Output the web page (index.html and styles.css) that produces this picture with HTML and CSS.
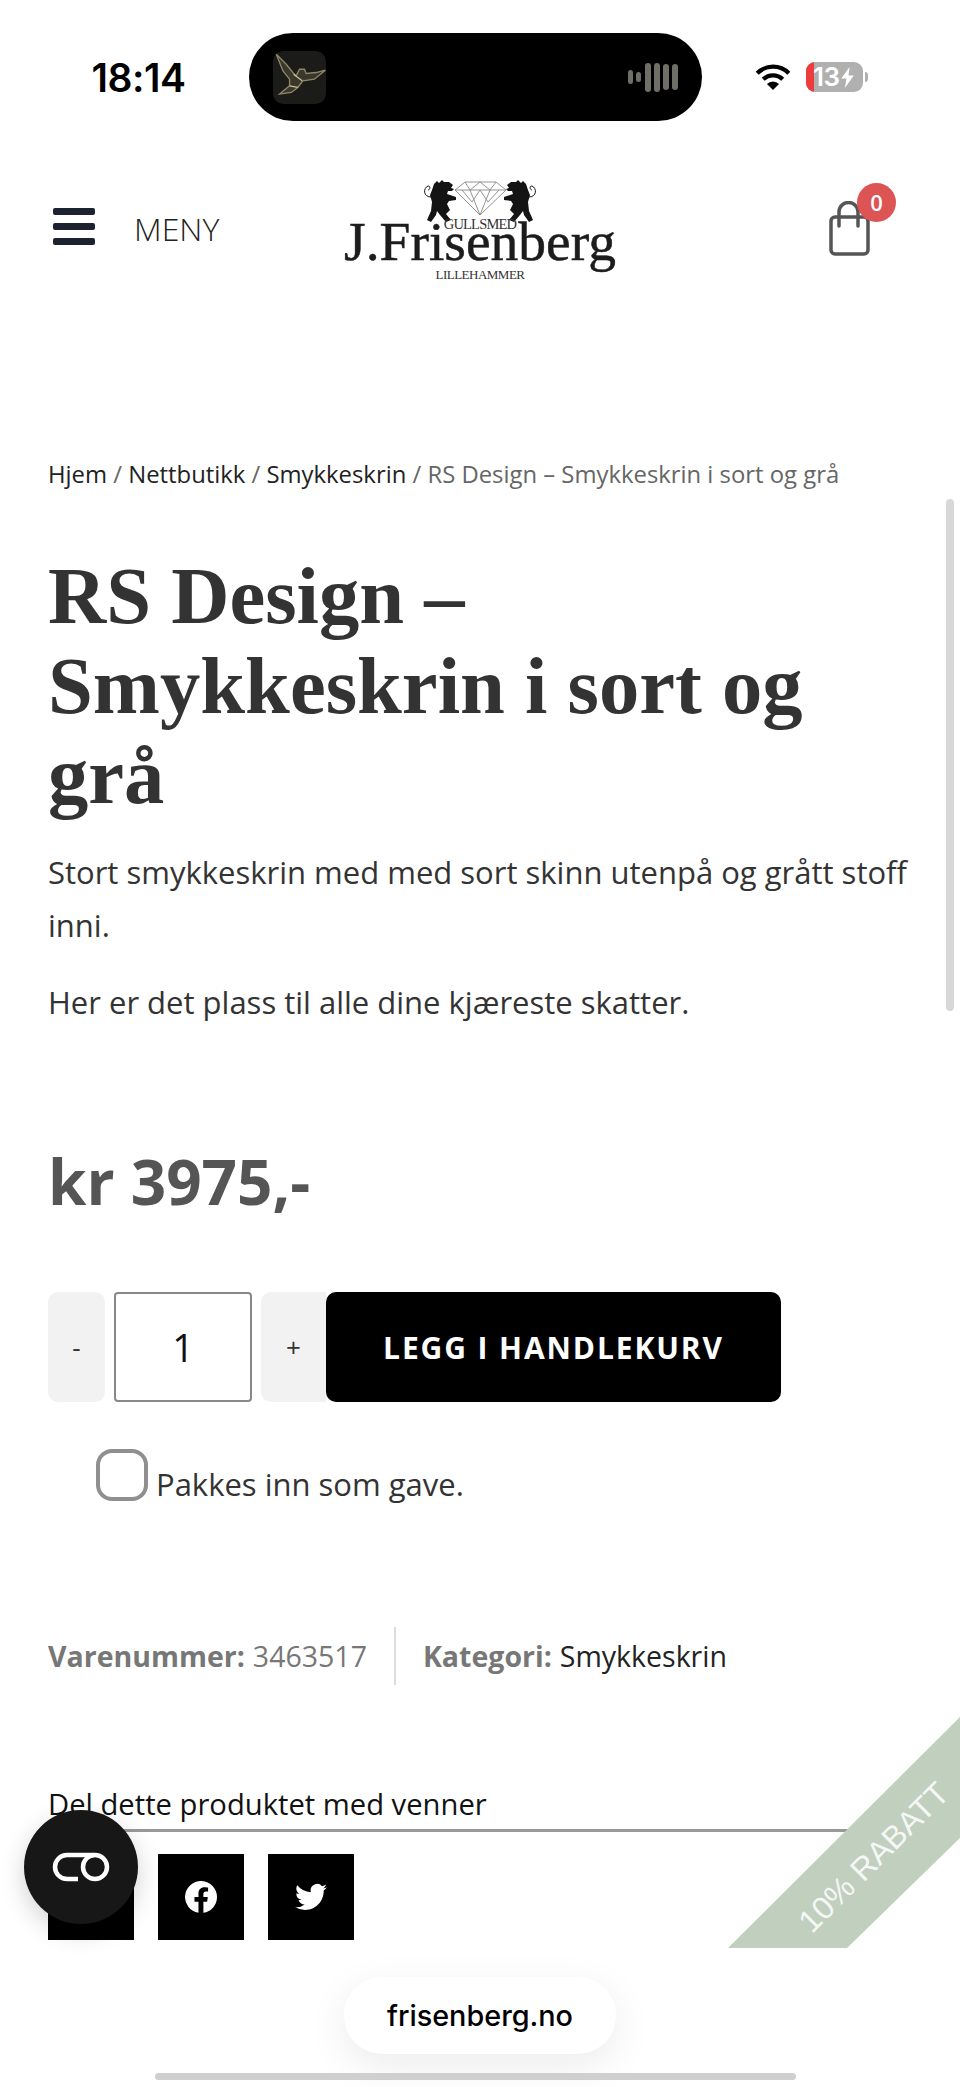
FILE: index.html
```html
<!DOCTYPE html>
<html lang="no">
<head>
<meta charset="utf-8">
<title>RS Design – Smykkeskrin i sort og grå</title>
<link rel="stylesheet" href="styles.css">
</head>
<body>
<div class="page">
  <div class="status">
    <span class="time">18:14</span>
    <div class="island">
      <svg class="album" viewBox="0 0 160 160"><rect width="160" height="160" rx="32" fill="#1b1b19"/><path d="M10 10 L40 40 L60 65 L70 75 L80 55 L95 55 L100 68 L130 65 L158 58 L125 85 L90 90 L75 110 L55 125 L20 130 L50 105 L50 85 L30 60Z" fill="#3a382c" stroke="#8f8768" stroke-width="4"/><path d="M62 70 L88 90 M50 105 L75 110" fill="none" stroke="#c9c08a" stroke-width="4"/></svg>
      <div class="wave"><i class="w1"></i><i class="w2"></i><i class="w3"></i><i class="w3"></i><i class="w4"></i><i class="w4"></i></div>
    </div>
    <div class="sys">
      <svg class="wifi" viewBox="0 0 38 28"><path d="M2 10 A24 24 0 0 1 36 10" fill="none" stroke="#000" stroke-width="4.600"/><path d="M8.500 16.500 A15 15 0 0 1 29.500 16.500" fill="none" stroke="#000" stroke-width="4.600"/><path d="M19 28 L12.500 21.500 A9 9 0 0 1 25.500 21.500Z" fill="#000"/></svg>
      <div class="battery"><span class="low"></span><span class="pct">13</span><svg class="bolt" viewBox="0 0 12 20"><path d="M8 0 L0 11 H5 L3.500 20 L12 8 H7Z" fill="#fff"/></svg></div>
      <span class="nub"></span>
    </div>
  </div>

  <header class="head">
    <div class="menu">
      <div class="burger"><i></i><i></i><i></i></div>
      <span class="menu-label">MENY</span>
    </div>
    <div class="logo">
      <svg class="crest" viewBox="0 0 114 43">
        <defs>
          <g id="lion">
            <path d="M11 4 L14 1 L16 3 L19 0 L21 2 L26 2 L30 5 L28 8 L31 9 L29 11 L25 11 L24 14 L33 17 L33 20 L26 21 L24 24 L27 30 L23 34 L28 40 L23 42 L17 35 L14 31 L13 35 L8 42 L4 40 L8 31 L9 22 L7 15 L9 10Z" fill="#141414"/>
            <path d="M8 17 C0 17 0 8 5 6 C8 6 7 10 5 10" fill="none" stroke="#141414" stroke-width="1"/>
          </g>
        </defs>
        <use href="#lion"/>
        <use href="#lion" transform="translate(114,0) scale(-1,1)"/>
        <path d="M32 10 L42 2 H73 L83 10 L57 35Z M32 10 H83 M42 2 L47 10 L57 2 L67 10 L73 2 M47 10 L57 35 L67 10 M39 10 L49 22 L57 10 L65 22 L76 10" fill="none" stroke="#888" stroke-width="0.900"/>
      </svg>
      <span class="logo-g">GULLSMED</span>
      <span class="logo-n">J.Frisenberg</span>
      <span class="logo-l">LILLEHAMMER</span>
    </div>
    <div class="cart">
      <svg class="bag" viewBox="0 0 42 56"><rect x="3" y="16" width="37" height="37" rx="4" fill="none" stroke="#555" stroke-width="3.500"/><path d="M11 25 V11 A9.500 9.500 0 0 1 30 11 V25" fill="none" stroke="#555" stroke-width="3.500" stroke-linecap="round"/></svg>
      <span class="badge">0</span>
    </div>
  </header>

  <main class="main">
    <nav class="crumbs"><a>Hjem</a> / <a>Nettbutikk</a> / <a>Smykkeskrin</a> / RS Design – Smykkeskrin i sort og grå</nav>
    <h1 class="title">RS Design – Smykkeskrin i sort og grå</h1>
    <p class="desc">Stort smykkeskrin med med sort skinn utenpå og grått stoff inni.</p>
    <p class="desc second">Her er det plass til alle dine kjæreste skatter.</p>
    <div class="price">kr 3975,-</div>
    <div class="buy">
      <button class="step minus">-</button>
      <div class="qty">1</div>
      <button class="step plus">+</button>
      <button class="add">LEGG I HANDLEKURV</button>
    </div>
    <label class="gift"><span class="check"></span><span class="gift-text">Pakkes inn som gave.</span></label>
    <div class="meta">
      <span class="meta-item"><b>Varenummer:</b> 3463517</span>
      <span class="meta-item cat"><b>Kategori:</b> <a>Smykkeskrin</a></span>
    </div>
    <div class="share-title">Del dette produktet med venner</div>
    <div class="share">
      <a class="tile"></a>
      <a class="tile"><svg class="ico" viewBox="0 0 24 24"><path fill="#fff" d="M24 12a12 12 0 1 0-13.900 11.900v-8.400H7.100V12h3V9.400c0-3 1.800-4.700 4.500-4.700 1.300 0 2.700.2 2.700.2v3h-1.500c-1.500 0-2 .9-2 1.900V12h3.300l-.5 3.500h-2.800v8.400A12 12 0 0 0 24 12z"/></svg></a>
      <a class="tile"><svg class="ico" viewBox="0 0 24 24"><path fill="#fff" d="M24 4.600a9.800 9.800 0 0 1-2.800.8 4.900 4.900 0 0 0 2.200-2.700 9.900 9.900 0 0 1-3.100 1.200 4.900 4.900 0 0 0-8.400 4.500A14 14 0 0 1 1.700 3.200a4.900 4.900 0 0 0 1.500 6.600 4.900 4.900 0 0 1-2.200-.6v.1a4.900 4.900 0 0 0 3.900 4.800 4.900 4.900 0 0 1-2.200.1 4.900 4.900 0 0 0 4.600 3.400A9.900 9.900 0 0 1 0 19.500a14 14 0 0 0 7.500 2.200c9.100 0 14-7.500 14-14v-.6A10 10 0 0 0 24 4.600z"/></svg></a>
    </div>
  </main>

  <div class="scroll"></div>
  <div class="ribbon"><span class="ribbon-text">10% RABATT</span></div>
  <div class="fab"><svg class="fab-ico" viewBox="0 0 58 30"><path d="M26 27 H15 A12 12 0 0 1 15 3 H42" fill="none" stroke="#fff" stroke-width="4.500"/><circle cx="43" cy="15" r="12" fill="none" stroke="#fff" stroke-width="4.500"/></svg></div>
  <div class="url">frisenberg.no</div>
  <div class="home"></div>
</div>
</body>
</html>
```
FILE: styles.css
```css
* { box-sizing: border-box; }
html, body { margin: 0; padding: 0; background: #fff; }
.page { position: relative; width: 960px; height: 2087px; overflow: hidden; font-family: "Open Sans", sans-serif; color: #333; }

.status { display: flex; align-items: center; height: 88px; margin-top: 33px; position: relative; }
.time { width: 249px; padding-left: 40px; padding-right: 12px; text-align: center; font-family: Inter, sans-serif; font-size: 39px; font-weight: 600; color: #000; letter-spacing: -0.5px; }
.island { width: 453px; height: 88px; background: #000; border-radius: 44px; display: flex; align-items: center; justify-content: space-between; padding: 0 24px; flex: none; }
.album { width: 53px; height: 53px; margin-top: 1px; }
.wave { display: flex; align-items: center; gap: 3px; }
.wave i { display: block; width: 6px; background: #6f6f68; border-radius: 3px; }
.wave .w1 { height: 14px; width: 5px; }
.wave .w2 { height: 10px; width: 5px; margin-right: 1px; }
.wave .w3 { height: 29px; }
.wave .w4 { height: 26px; }
.sys { display: flex; align-items: center; margin-left: 52px; }
.wifi { width: 38px; height: 26px; }
.battery { display: flex; align-items: center; position: relative; margin-left: 14px; width: 57px; height: 30px; background: #b0b0b0; border-radius: 9px; overflow: hidden; padding-left: 7px; }
.low { position: absolute; left: 0; top: 0; bottom: 0; width: 8px; background: #ee3b3b; }
.pct { position: relative; font-family: Inter, sans-serif; font-size: 26px; font-weight: 600; color: #fff; letter-spacing: -0.5px; line-height: 30px; }
.bolt { width: 13px; height: 21px; margin-left: 1px; }
.nub { width: 3px; height: 10px; margin-left: 2px; background: #b0b0b0; border-radius: 0 3px 3px 0; }

.head { display: flex; align-items: flex-start; height: 160px; position: relative; margin-top: 59px; }
.menu { display: flex; align-items: center; padding-left: 53px; margin-top: 26px; height: 40px; width: 344px; }
.burger { display: flex; flex-direction: column; gap: 8px; width: 42px; }
.burger i { display: block; height: 7px; background: #1c2230; border-radius: 2px; }
.menu-label { margin-left: 39px; font-size: 32px; font-weight: 300; color: #222; line-height: 40px; margin-top: 5px; }
.logo { width: 272px; display: flex; flex-direction: column; align-items: center; flex: none; position: relative; }
.crest { width: 114px; height: 43px; display: block; }
.logo-g { font-family: "Liberation Serif", serif; font-size: 14.500px; line-height: 14px; letter-spacing: -0.800px; color: #333; margin-top: -6px; position: relative; }
.logo-n { font-family: "Liberation Serif", serif; font-size: 55.500px; line-height: 44px; color: #1c1c1c; -webkit-text-stroke: 0.500px #1c1c1c; margin-top: -11px; white-space: nowrap; }
.logo-l { font-family: "Liberation Serif", serif; font-size: 13px; line-height: 13px; letter-spacing: -0.500px; color: #333; margin-top: 4px; }
.cart { position: relative; margin-left: 212px; width: 60px; margin-top: 21px; }
.bag { width: 42px; height: 56px; display: block; }
.badge { position: absolute; left: 29px; top: -18px; width: 39px; height: 39px; background: #dc5454; color: #fff; border-radius: 50%; text-align: center; font-size: 22px; font-weight: 600; line-height: 38px; }

.main { padding: 0 48px; margin-top: 116px; position: relative; }
.crumbs { font-size: 23.850px; line-height: 36px; color: #666; white-space: nowrap; }
.crumbs a { color: #222; }
.title { font-family: "Liberation Serif", serif; font-weight: 700; font-size: 80.600px; line-height: 90px; color: #333; margin: 59px 0 25px; width: 800px; }
.desc { font-size: 31px; line-height: 53px; color: #333; margin: 0; }
.second { margin-top: 24px; }
.price { font-size: 62px; font-weight: 700; line-height: 80px; color: #555; margin-top: 112px; }
.buy { display: flex; align-items: stretch; height: 110px; margin-top: 71px; }
.step { border: 0; background: #f2f2f2; font-family: "Open Sans", sans-serif; font-size: 26px; color: #333; border-radius: 10px 0 0 10px; padding: 0; }
.minus { width: 57px; border-radius: 10px; margin-right: 9px; }
.plus { width: 65px; margin-left: 9px; }
.qty { width: 138px; border: 2px solid #888; border-radius: 4px; text-align: center; font-size: 38px; font-weight: 400; line-height: 106px; color: #111; }
.add { width: 455px; border: 0; background: #000; color: #fff; border-radius: 10px; font-family: "Open Sans", sans-serif; font-weight: 700; font-size: 30px; letter-spacing: 1.900px; padding: 0; }
.gift { display: flex; align-items: flex-end; margin: 47px 0 0 48px; font-size: 31px; line-height: 42px; color: #333; }
.gift-text { margin-bottom: -4px; }
.check { width: 52px; height: 52px; border: 4px solid #8f8f8f; border-radius: 16px; margin-right: 8px; flex: none; }
.meta { display: flex; align-items: center; height: 58px; margin-top: 126px; font-size: 28.500px; color: #777; }
.meta b { font-weight: 700; }
.meta-item { display: flex; align-items: center; gap: 8px; height: 100%; }
.cat { border-left: 2px solid #ddd; margin-left: 27px; padding-left: 27px; }
.cat a { color: #222; }
.share-title { font-size: 29.200px; line-height: 40px; color: #111; margin-top: 99px; padding-bottom: 5px; border-bottom: 3px solid #999; }
.share { display: flex; gap: 24px; margin-top: 22px; }
.tile { width: 86px; height: 86px; background: #000; display: flex; align-items: center; justify-content: center; }
.ico { width: 32px; height: 32px; }

.scroll { position: absolute; left: 946px; top: 499px; width: 8px; height: 512px; background: #d8d8d8; border-radius: 4px; }
.ribbon { position: absolute; right: 0; top: 1717px; width: 232px; height: 231px; background: #c1cfbf; clip-path: polygon(100% 0, 100% 121px, 119px 100%, 0 100%); }
.ribbon-text { position: absolute; left: 36px; top: 122px; width: 220px; text-align: center; font-family: "Liberation Sans", sans-serif; font-size: 32px; color: rgba(255,255,255,.85); transform: rotate(-45deg); white-space: nowrap; }
.fab { position: absolute; left: 24px; top: 1810px; width: 114px; height: 114px; border-radius: 50%; background: #171717; display: flex; align-items: center; justify-content: center; box-shadow: 0 8px 24px rgba(0,0,0,.18); }
.fab-ico { width: 58px; height: 30px; }
.url { position: absolute; left: 344px; top: 1977px; width: 272px; height: 77px; background: #fff; border-radius: 38px; text-align: center; font-family: Inter, sans-serif; font-size: 28.800px; font-weight: 500; line-height: 77px; color: #000; box-shadow: 0 12px 40px rgba(0,0,0,.08); }
.home { position: absolute; left: 155px; top: 2073px; width: 641px; height: 7px; background: #cfcfcf; border-radius: 4px; }
```
